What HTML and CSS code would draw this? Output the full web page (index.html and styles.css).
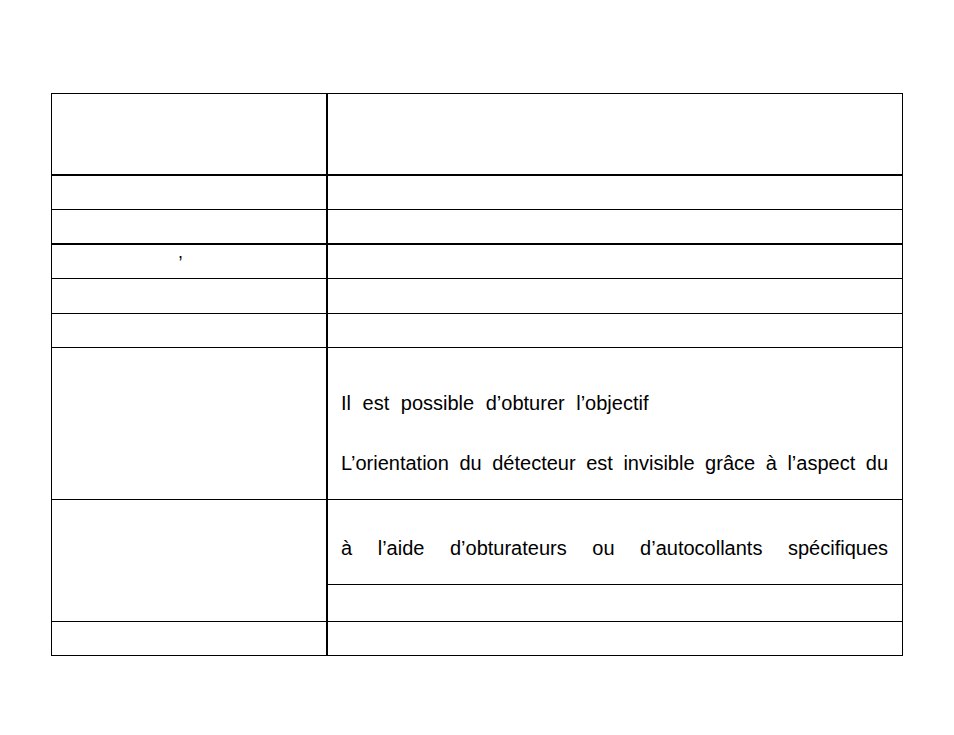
FILE: index.html
```html
<!DOCTYPE html>
<html lang="fr">
<head>
<meta charset="utf-8">
<title>Tableau</title>
<link rel="stylesheet" href="styles.css">
</head>
<body>
<div class="table">
  <div class="row r-head"><div class="cell left"></div><div class="cell right"></div></div>
  <div class="row r-34"><div class="cell left"></div><div class="cell right"></div></div>
  <div class="row r-35 thick"><div class="cell left"></div><div class="cell right"></div></div>
  <div class="row r-34"><div class="cell left"><span class="comma">,</span></div><div class="cell right"></div></div>
  <div class="row r-35"><div class="cell left"></div><div class="cell right"></div></div>
  <div class="row r-34"><div class="cell left"></div><div class="cell right"></div></div>
  <div class="row r-tall">
    <div class="cell left"></div>
    <div class="cell right text-cell">
      <p class="line first">Il est possible d’obturer l’objectif</p>
      <p class="line second justified">L’orientation du détecteur est invisible grâce à l’aspect du</p>
    </div>
  </div>
  <div class="row r-split">
    <div class="cell left"></div>
    <div class="cell right split">
      <div class="sub sub-top"><p class="line justified">à l’aide d’obturateurs ou d’autocollants spécifiques</p></div>
      <div class="sub sub-bottom"></div>
    </div>
  </div>
  <div class="row r-last"><div class="cell left"></div><div class="cell right"></div></div>
</div>
</body>
</html>
```
FILE: styles.css
```css
html, body {
  margin: 0;
  padding: 0;
  background: #fff;
}
body {
  font-family: "Liberation Sans", Arial, sans-serif;
  color: #000;
}
.table {
  box-sizing: border-box;
  width: 852px;
  margin: 93px 0 0 51px;
  border: 1px solid #000;
}
.row {
  box-sizing: border-box;
  display: flex;
  border-bottom: 1px solid #000;
}
.row.thick, .r-head {
  border-bottom-width: 2px;
}
.r-head { height: 82px; }
.r-34 { height: 34px; }
.r-35 { height: 35px; }
.r-tall { height: 152px; }
.r-split { height: 122px; }
.r-last { height: 33px; border-bottom: none; }
.cell {
  box-sizing: border-box;
}
.left {
  width: 276px;
  flex: none;
  border-right: 2px solid #000;
}
.right {
  flex: 1;
  min-width: 0;
}
.comma {
  display: block;
  padding-left: 126px;
  font-size: 18px;
  line-height: 14px;
}
.line {
  margin: 0;
  font-size: 20px;
  line-height: 24px;
  word-spacing: 6px;
  white-space: nowrap;
}
.text-cell {
  padding: 43px 14px 0 13px;
}
.text-cell .second {
  margin-top: 36px;
}
.split {
  display: flex;
  flex-direction: column;
}
.sub-top {
  box-sizing: border-box;
  height: 85px;
  border-bottom: 1px solid #000;
  padding: 36px 14px 0 13px;
}
.sub-bottom {
  flex: 1;
}
.line.justified {
  white-space: normal;
  word-spacing: 0;
  text-align: justify;
  text-align-last: justify;
}
```
